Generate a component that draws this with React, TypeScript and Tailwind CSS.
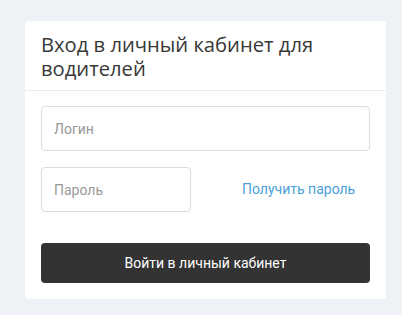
export default function App() {
  return (
    <div className="min-h-[315px] bg-[#eef2f6] pt-[21px] pl-[25px] pr-[16px] font-['Roboto',sans-serif]">
      <div className="w-[361px] bg-white rounded-[4px]">
        <div className="px-4 pt-[11px] pb-[10px] border-b border-[#e8ecef]">
          <h1 className="font-['Open_Sans',sans-serif] text-[20.2px] leading-[24px] text-[#383838]">
            Вход в личный кабинет для водителей
          </h1>
        </div>
        <div className="px-4 pt-[15px] pb-[16px] flex flex-col">
          <input
            placeholder="Логин"
            className="h-[45px] w-full border border-[#dadde0] rounded-[4px] px-3 text-[14px] text-[#333] placeholder:text-[#999] outline-none"
          />
          <div className="flex items-center mt-4">
            <input
              type="password"
              placeholder="Пароль"
              className="h-[45px] w-[150px] border border-[#dadde0] rounded-[4px] px-3 text-[14px] text-[#333] placeholder:text-[#999] outline-none"
            />
            <a href="#" className="ml-[51px] text-[14px] text-[#4a9fd8]">
              Получить пароль
            </a>
          </div>
          <button className="mt-[31px] h-[40px] w-full bg-[#333] rounded-[4px] text-white text-[14px]">
            Войти в личный кабинет
          </button>
        </div>
      </div>
    </div>
  );
}
